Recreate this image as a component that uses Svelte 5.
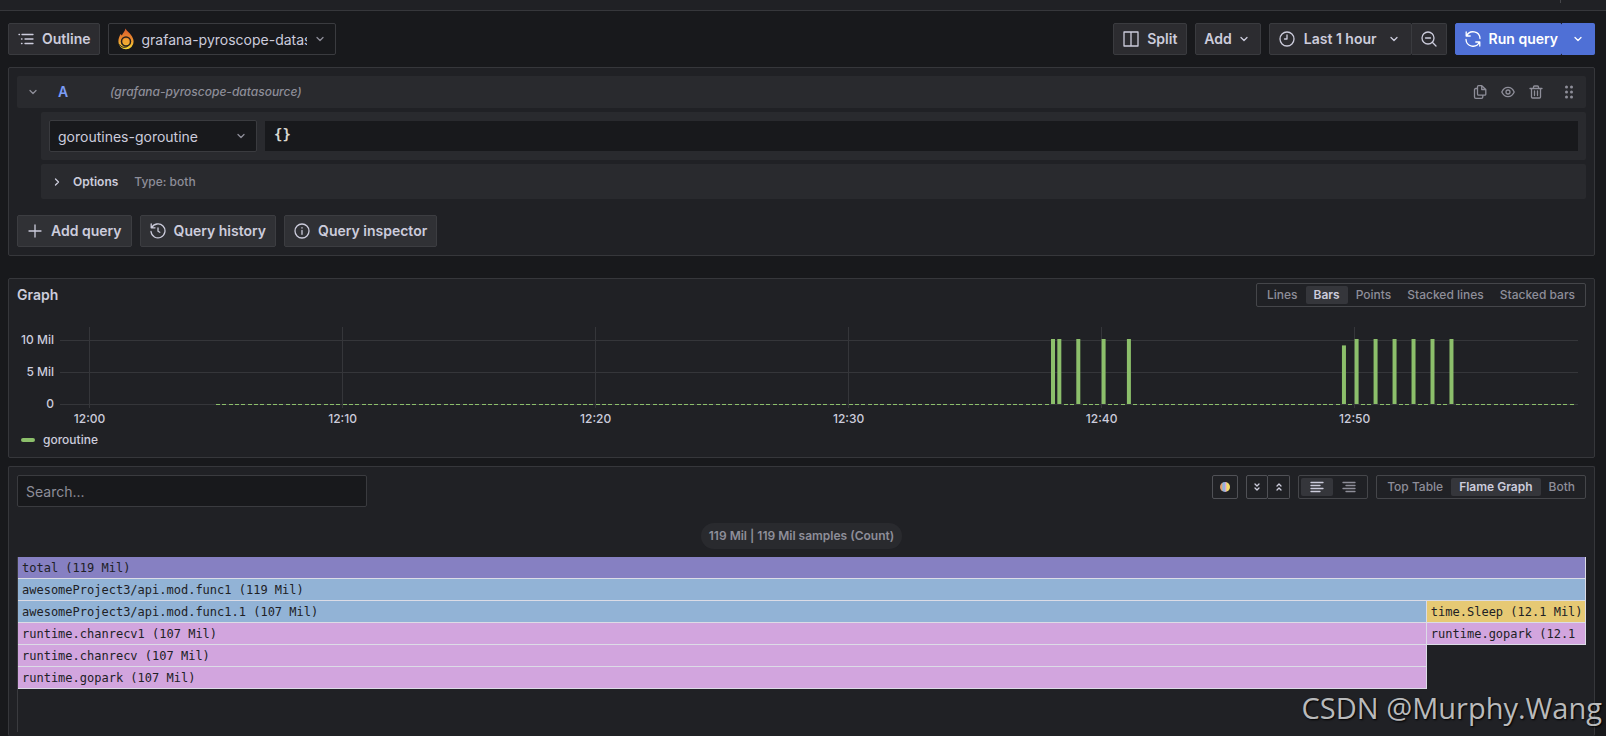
<script lang="ts">
  type Frame = { name: string; value: string; size: number; color: string };

  let dataSource = $state('grafana-pyroscope-datasource');
  let profileType = $state('goroutines-goroutine');
  let selector = $state('{}');
  let search = $state('');
  let graphStyle = $state('Bars');
  let align = $state('left');
  let view = $state('Flame Graph');
  let chartWidth = $state(1570);

  const graphStyles = ['Lines', 'Bars', 'Points', 'Stacked lines', 'Stacked bars'];
  const views = ['Top Table', 'Flame Graph', 'Both'];

  // chart geometry; time is in minutes after 12:00, one sample every 15s
  const plotLeft = 43;
  const plotRight = 8;
  const firstMinute = -1.17;
  const lastMinute = 58.83;
  const baseY = 85;
  const unitY = 6.4;
  const ticks = [0, 10, 20, 30, 40, 50];
  const yTicks = [{ v: 10, label: '10 Mil' }, { v: 5, label: '5 Mil' }, { v: 0, label: '0' }];

  const spikes: Record<number, number> = {
    38: 10, 38.25: 10, 39: 10, 40: 10, 41: 10,
    49.5: 9, 50: 10, 50.75: 10, 51.5: 10, 52.25: 10, 53: 10, 53.75: 10,
  };
  const samples = Array.from({ length: 215 }, (_, i) => {
    const t = 5 + i / 4;
    return { t, v: spikes[t] ?? 0 };
  });

  function x(t: number) {
    const w = chartWidth - plotLeft - plotRight;
    return plotLeft + ((t - firstMinute) / (lastMinute - firstMinute)) * w;
  }

  const levels: Frame[][] = [
    [{ name: 'total', value: '119 Mil', size: 100, color: 'violet' }],
    [{ name: 'awesomeProject3/api.mod.func1', value: '119 Mil', size: 100, color: 'blue' }],
    [
      { name: 'awesomeProject3/api.mod.func1.1', value: '107 Mil', size: 89.85, color: 'blue' },
      { name: 'time.Sleep', value: '12.1 Mil', size: 10.15, color: 'yellow' },
    ],
    [
      { name: 'runtime.chanrecv1', value: '107 Mil', size: 89.85, color: 'pink' },
      { name: 'runtime.gopark', value: '12.1 Mil', size: 10.15, color: 'pink' },
    ],
    [{ name: 'runtime.chanrecv', value: '107 Mil', size: 89.85, color: 'pink' }],
    [{ name: 'runtime.gopark', value: '107 Mil', size: 89.85, color: 'pink' }],
  ];

  // keep only the whole characters that fit inside the frame
  const charWidth = 7.25;
  function frameLabel(f: Frame) {
    const room = (chartWidth * f.size) / 100 - 5;
    return `${f.name} (${f.value})`.slice(0, Math.floor(room / charWidth));
  }
</script>

{#snippet chevron()}
  <svg class="icon" width="16" height="16" viewBox="0 0 16 16"><path d="M5 6.5l3 3 3-3" /></svg>
{/snippet}

<div class="page">
  <header class="nav"><span class="nav-tick"></span></header>

  <!-- Toolbar -->
  <div class="toolbar">
    <button class="btn">
      <svg class="icon" width="16" height="16" viewBox="0 0 16 16"><path d="M1 3.500h.5M4 3.500h11M3.500 8H4M7 8h8M3.500 12.500H4M7 12.500h8" /></svg>
      Outline
    </button>
    <div class="picker source">
      <svg class="flame-logo" width="16" height="22" viewBox="0 0 16 22">
        <defs>
          <linearGradient id="fire" x1="0" y1="0" x2="0" y2="1">
            <stop offset="0" stop-color="#d95b2b" /><stop offset=".5" stop-color="#ea8a2f" /><stop offset="1" stop-color="#f7dc35" />
          </linearGradient>
        </defs>
        <path fill="url(#fire)" d="M7.500 .5c1 2.500 4 4 5.500 6.500 1.500 2.200 2.600 4 2.600 6.500A7.600 7.600 0 0 1 8 21.300 7.600 7.600 0 0 1 .4 13.500c0-3 1-5.300 2.200-7.500l1.300 1.500C4.700 5 7 3.500 7.500 .5z" />
        <circle cx="8" cy="13.500" r="4.500" fill="none" stroke="#25201d" stroke-width="1.500" />
        <circle cx="8" cy="13.500" r="2.800" fill="#f0a632" />
        <path d="M1.500 16.500c2 3 5 3.500 8 2" fill="none" stroke="#25201d" stroke-width="1" />
      </svg>
      <select aria-label="Data source" bind:value={dataSource}>
        <option>grafana-pyroscope-datasource</option>
      </select>
      {@render chevron()}
    </div>

    <div class="spacer"></div>

    <button class="btn">
      <svg class="icon" width="16" height="16" viewBox="0 0 16 16"><path d="M1 1h14v14H1zM8 1v14" /></svg>
      Split
    </button>
    <button class="btn tight">Add {@render chevron()}</button>
    <div class="group">
      <button class="btn time">
        <svg class="icon" width="16" height="16" viewBox="0 0 16 16"><circle cx="8" cy="8" r="7" /><path d="M8 4v4H5.500" /></svg>
        <span>Last 1 hour</span>
        {@render chevron()}
      </button>
      <button class="btn" aria-label="Zoom out time range">
        <svg class="icon" width="16" height="16" viewBox="0 0 16 16"><circle cx="7" cy="7" r="6" /><path d="M11.300 11.300L15 15M4.500 7h5" /></svg>
      </button>
    </div>
    <div class="group">
      <button class="btn primary run">
        <svg class="icon" width="16" height="16" viewBox="0 0 16 16"><path d="M1.200 1v4h4M1.600 5A7 7 0 0 1 15 7.500M14.800 15v-4h-4M14.400 11A7 7 0 0 1 1 8.500" /></svg>
        Run query
      </button>
      <button class="btn primary more" aria-label="Run options">{@render chevron()}</button>
    </div>
  </div>

  <!-- Query editor -->
  <section class="panel query">
    <div class="query-head">
      <button class="bare" aria-label="Collapse query">{@render chevron()}</button>
      <span class="ref-id">A</span>
      <em>(grafana-pyroscope-datasource)</em>
      <div class="spacer"></div>
      <div class="actions">
        <button class="bare" aria-label="Duplicate query">
          <svg class="icon" width="14" height="14" viewBox="0 0 14 14"><path d="M5.500 .7h3.300L12.800 4.500v4.700a1 1 0 0 1-1 1H5.500a1 1 0 0 1-1-1V1.700a1 1 0 0 1 1-1zM8.700 .8v3.700h4M4.400 3.500H2.700a1.200 1.200 0 0 0-1.200 1.200v7.300a1.300 1.300 0 0 0 1.300 1.300h5.700a1.300 1.300 0 0 0 1.300-1.300v-1.700" /></svg>
        </button>
        <button class="bare" aria-label="Hide response">
          <svg class="icon" width="14" height="14" viewBox="0 0 14 14"><path d="M.8 7C3.500 .8 10.500 .8 13.200 7 10.500 13.200 3.500 13.200 .8 7z" /><circle cx="7" cy="7" r="2" /></svg>
        </button>
        <button class="bare" aria-label="Remove query">
          <svg class="icon" width="14" height="14" viewBox="0 0 14 14"><path d="M1 3.500h12M4.500 3.500V2a1 1 0 0 1 1-1h3a1 1 0 0 1 1 1v1.500M2.500 3.500V12a1 1 0 0 0 1 1h7a1 1 0 0 0 1-1V3.500M5.500 6v4.500M8.500 6v4.500" /></svg>
        </button>
        <button class="bare drag" aria-label="Drag to reorder">
          <svg class="dots" width="14" height="14" viewBox="0 0 14 14">
            {#each [2, 7, 12] as cy}
              <circle cx="4.500" {cy} r="1.500" /><circle cx="9.500" {cy} r="1.500" />
            {/each}
          </svg>
        </button>
      </div>
    </div>

    <div class="query-row">
      <div class="picker profile">
        <select aria-label="Profile type" bind:value={profileType}>
          <option>goroutines-goroutine</option>
        </select>
        {@render chevron()}
      </div>
      <input class="selector" aria-label="Label selector" bind:value={selector} />
    </div>

    <div class="query-row options">
      <button class="bare opt">
        <svg class="icon" width="16" height="16" viewBox="0 0 16 16"><path d="M6.500 5l3 3-3 3" /></svg>
        <strong>Options</strong>
      </button>
      <span class="muted">Type: both</span>
    </div>

    <div class="query-buttons">
      <button class="btn">
        <svg class="icon" width="16" height="16" viewBox="0 0 16 16"><path d="M8 2v12M2 8h12" /></svg>
        Add query
      </button>
      <button class="btn">
        <svg class="icon" width="16" height="16" viewBox="0 0 16 16"><path d="M1.200 1v3.800H5M1.700 4.800A7 7 0 1 1 1 8.500M8 5v3.200l1.800 1" /></svg>
        Query history
      </button>
      <button class="btn">
        <svg class="icon" width="16" height="16" viewBox="0 0 16 16"><circle cx="8" cy="8" r="7" /><path d="M8 7.500v3.800M8 4.700v.3" /></svg>
        Query inspector
      </button>
    </div>
  </section>

  <!-- Graph -->
  <section class="panel graph">
    <div class="graph-head">
      <h2>Graph</h2>
      <div class="radios" role="group" aria-label="Graph style">
        {#each graphStyles as s}
          <button class:active={graphStyle === s} onclick={() => (graphStyle = s)}>{s}</button>
        {/each}
      </div>
    </div>
    <div class="chart" bind:clientWidth={chartWidth}>
      <svg width="100%" height="112" aria-label="goroutine">
        {#each yTicks as { v, label }}
          <line class="grid" x1={plotLeft} x2={chartWidth - plotRight} y1={baseY - v * unitY + 0.5} y2={baseY - v * unitY + 0.5} />
          <text x={plotLeft - 6} y={baseY - v * unitY + 4} text-anchor="end">{label}</text>
        {/each}
        {#each ticks as t}
          <line class="grid" x1={Math.floor(x(t)) + 0.5} x2={Math.floor(x(t)) + 0.5} y1="8" y2="89" />
          <text x={x(t)} y="104" text-anchor="middle">12:{String(t).padStart(2, '0')}</text>
        {/each}
        {#each samples as { t, v }}
          <rect class="bar" x={v ? x(t) : Math.round(x(t))} y={baseY - v * unitY - (v ? 1 : 0)} width="4" height={v * unitY + 1} />
        {/each}
      </svg>
    </div>
    <div class="legend"><i></i>goroutine</div>
  </section>

  <!-- Flame graph -->
  <section class="panel flame">
    <div class="flame-head">
      <input class="search" placeholder="Search..." aria-label="Search" bind:value={search} />
      <div class="spacer"></div>
      <button class="outlined color" aria-label="Change color scheme"><i></i></button>
      <div class="group">
        <button class="outlined" aria-label="Expand all groups">
          <svg class="icon" width="12" height="12" viewBox="0 0 12 12"><path d="M4 3l2 2 2-2M4 7l2 2 2-2" /></svg>
        </button>
        <button class="outlined" aria-label="Collapse all groups">
          <svg class="icon" width="12" height="12" viewBox="0 0 12 12"><path d="M4 5l2-2 2 2M4 9l2-2 2 2" /></svg>
        </button>
      </div>
      <div class="radios aligns" role="group" aria-label="Text align">
        <button class:active={align === 'left'} aria-label="Align left" onclick={() => (align = 'left')}>
          <svg class="icon" width="14" height="12" viewBox="0 0 14 12"><path d="M1 1.500h12M1 4.500h9M1 7.500h12M1 10.500h9" /></svg>
        </button>
        <button class:active={align === 'right'} aria-label="Align right" onclick={() => (align = 'right')}>
          <svg class="icon" width="14" height="12" viewBox="0 0 14 12"><path d="M1 1.500h12M4 4.500h9M1 7.500h12M4 10.500h9" /></svg>
        </button>
      </div>
      <div class="radios" role="group" aria-label="View">
        {#each views as v}
          <button class:active={view === v} onclick={() => (view = v)}>{v}</button>
        {/each}
      </div>
    </div>

    <div class="summary"><span>119 Mil | 119 Mil samples (Count)</span></div>

    <div class="frames">
      {#each levels as level}
        <div class="level">
          {#each level as f}
            <div class="frame {f.color}" style="width: {f.size}%">{frameLabel(f)}</div>
          {/each}
        </div>
      {/each}
    </div>
  </section>

  <div class="watermark">CSDN @Murphy.Wang</div>
</div>

<style>
  :global(body) { background: #18191c; overflow: hidden; }

  .page {
    display: flex; flex-direction: column; min-height: 100vh;
    font: 14px/20px Inter, sans-serif; color: #ccccdc;
  }
  .page * { box-sizing: border-box; }
  button, input, select { font: inherit; color: inherit; margin: 0; }
  button { cursor: pointer; }
  .spacer { flex: 1; }
  .icon { flex: none; fill: none; stroke: currentColor; stroke-width: 1.3; stroke-linecap: round; stroke-linejoin: round; }
  .muted { color: #8e8e99; font-weight: 500; }

  .nav { display: flex; justify-content: flex-end; height: 11px; padding-right: 45px; background: #202125; border-bottom: 1px solid #36373b; }
  .nav-tick { width: 1px; height: 3px; background: #45464a; }

  .toolbar { display: flex; gap: 8px; padding: 12px 11px 12px 8px; }
  .btn {
    display: flex; align-items: center; gap: 8px; height: 32px; padding: 0 9px;
    background: #2c2c30; border: 1px solid #3a3b3f; border-radius: 2px;
    font-weight: 600; white-space: nowrap;
  }
  .btn.tight { gap: 4px; padding: 0 8px; }
  .btn.time { gap: 9px; }
  .group { display: flex; }
  .group > button + button { border-left: 0; border-radius: 0 2px 2px 0; }
  .btn.primary { background: #4f70d6; border-color: #4f70d6; color: #fff; }
  .btn.run { padding-right: 3px; }
  .btn.primary.more { padding: 0 8px; }

  .picker { display: flex; align-items: center; height: 32px; padding: 0 7px; background: #18191c; border: 1px solid #3a3b3f; border-radius: 2px; }
  .picker select { flex: 1; min-width: 0; height: 24px; padding: 2px 0 0; background: none; border: 0; appearance: none; outline: none; text-overflow: clip; }
  .picker .icon { color: #8e8e99; }
  .source { width: 228px; padding-left: 9px; }
  .source select { margin: 0 5px 0 7px; }

  .panel { background: #202125; border: 1px solid #36373b; border-radius: 2px; margin: 0 11px 0 8px; padding: 8px; }

  .query { display: flex; flex-direction: column; gap: 4px; margin-bottom: 22px; }
  .query-head { display: flex; align-items: center; height: 32px; padding: 0 10px 0 8px; background: #292a2e; border-radius: 2px; }
  .query-head em { color: #8e8e99; font-size: 12px; font-weight: 500; }
  .ref-id { width: 52px; margin-left: 17px; color: #7b9cf5; font-weight: 600; }
  .bare { display: flex; align-items: center; padding: 0; background: none; border: 0; }
  .query-head .bare { color: #8e8e99; }
  .actions { display: flex; gap: 14px; }
  .drag { margin-left: 5px; }
  .dots { fill: currentColor; }
  .query-row { display: flex; align-items: center; gap: 8px; margin-left: 24px; padding: 8px; background: #292a2e; border-radius: 2px; }
  .profile { width: 208px; padding-left: 8px; }
  .selector { flex: 1; height: 30px; padding: 0 9px 4px; background: #18191c; border: 0; outline: none; font-family: 'DejaVu Sans Mono', monospace; font-weight: 700; color: #d8d8d0; }
  .options { height: 35px; gap: 16px; font-size: 12px; }
  .opt { gap: 8px; }
  .opt strong { font-weight: 600; }
  .query-buttons { display: flex; gap: 8px; margin-top: 12px; }
  .query-buttons .btn { background: #303135; border-color: #3c3d41; }

  .graph { padding: 4px 8px 8px; margin-bottom: 8px; }
  .graph-head { display: flex; justify-content: space-between; align-items: center; }
  h2 { margin: 0; font-size: 14px; font-weight: 600; }
  .radios { display: flex; height: 24px; padding: 2px; border: 1px solid #45464a; border-radius: 2px; }
  .radios button { display: flex; align-items: center; padding: 0 8px; background: none; border: 0; border-radius: 2px; font-size: 12px; font-weight: 500; color: #8e8e99; }
  .radios button.active { background: #35363b; color: #ccccdc; font-weight: 600; }
  .chart { margin-top: 12px; }
  .chart svg { display: block; }
  .chart text { fill: #ccccdc; font-size: 12px; font-weight: 500; }
  .grid { stroke: #35363a; }
  .bar { fill: #8cbf6b; }
  .legend { display: flex; align-items: center; gap: 8px; padding-left: 4px; line-height: 18px; font-size: 12px; font-weight: 500; }
  .legend i { width: 14px; height: 4px; border-radius: 2px; background: #8cbf6b; }

  .flame { flex: 1; display: flex; flex-direction: column; padding-bottom: 4px; border-bottom: 0; }
  .flame-head { display: flex; align-items: flex-start; gap: 8px; }
  .search { width: 350px; height: 32px; padding: 0 8px; background: #18191c; border: 1px solid #3a3b3f; border-radius: 2px; outline: none; }
  .search::placeholder { color: #8e8e99; opacity: 1; }
  .outlined { display: flex; align-items: center; justify-content: center; width: 22px; height: 24px; padding: 0; background: none; border: 1px solid #505156; border-radius: 2px; }
  .outlined.color { width: 26px; }
  .color i { width: 10px; height: 10px; border-radius: 5px; background: linear-gradient(90deg, #e0a070 0 15%, #92b4d8 30% 45%, #d2a5de 52% 58%, #f2da6a 68%); }
  .aligns button { width: 32px; justify-content: center; padding: 0; }
  .summary { display: flex; justify-content: center; margin: 16px 0 8px; }
  .summary span { padding: 3px 8px; border-radius: 13px; background: #292a2e; color: #8e8e99; font-size: 12px; font-weight: 600; }

  .frames { flex: 1; border-left: 1px solid #3a3b3f; font: 12px/23px 'DejaVu Sans Mono', monospace; color: #202125; }
  .level { display: flex; }
  .frame { height: 22px; padding-left: 4px; overflow: hidden; white-space: nowrap; border-right: 1px solid #dcdce6; border-bottom: 1px solid #dcdce6; }
  .violet { background: #8680c2; }
  .blue { background: #92b3d6; }
  .yellow { background: #e6c974; }
  .pink { background: #d2a5de; }

  .watermark { position: absolute; right: 4px; bottom: 8px; font: 29px/40px 'Open Sans', sans-serif; color: #b9babb; text-shadow: 1px 1px 2px #000; pointer-events: none; }
</style>
